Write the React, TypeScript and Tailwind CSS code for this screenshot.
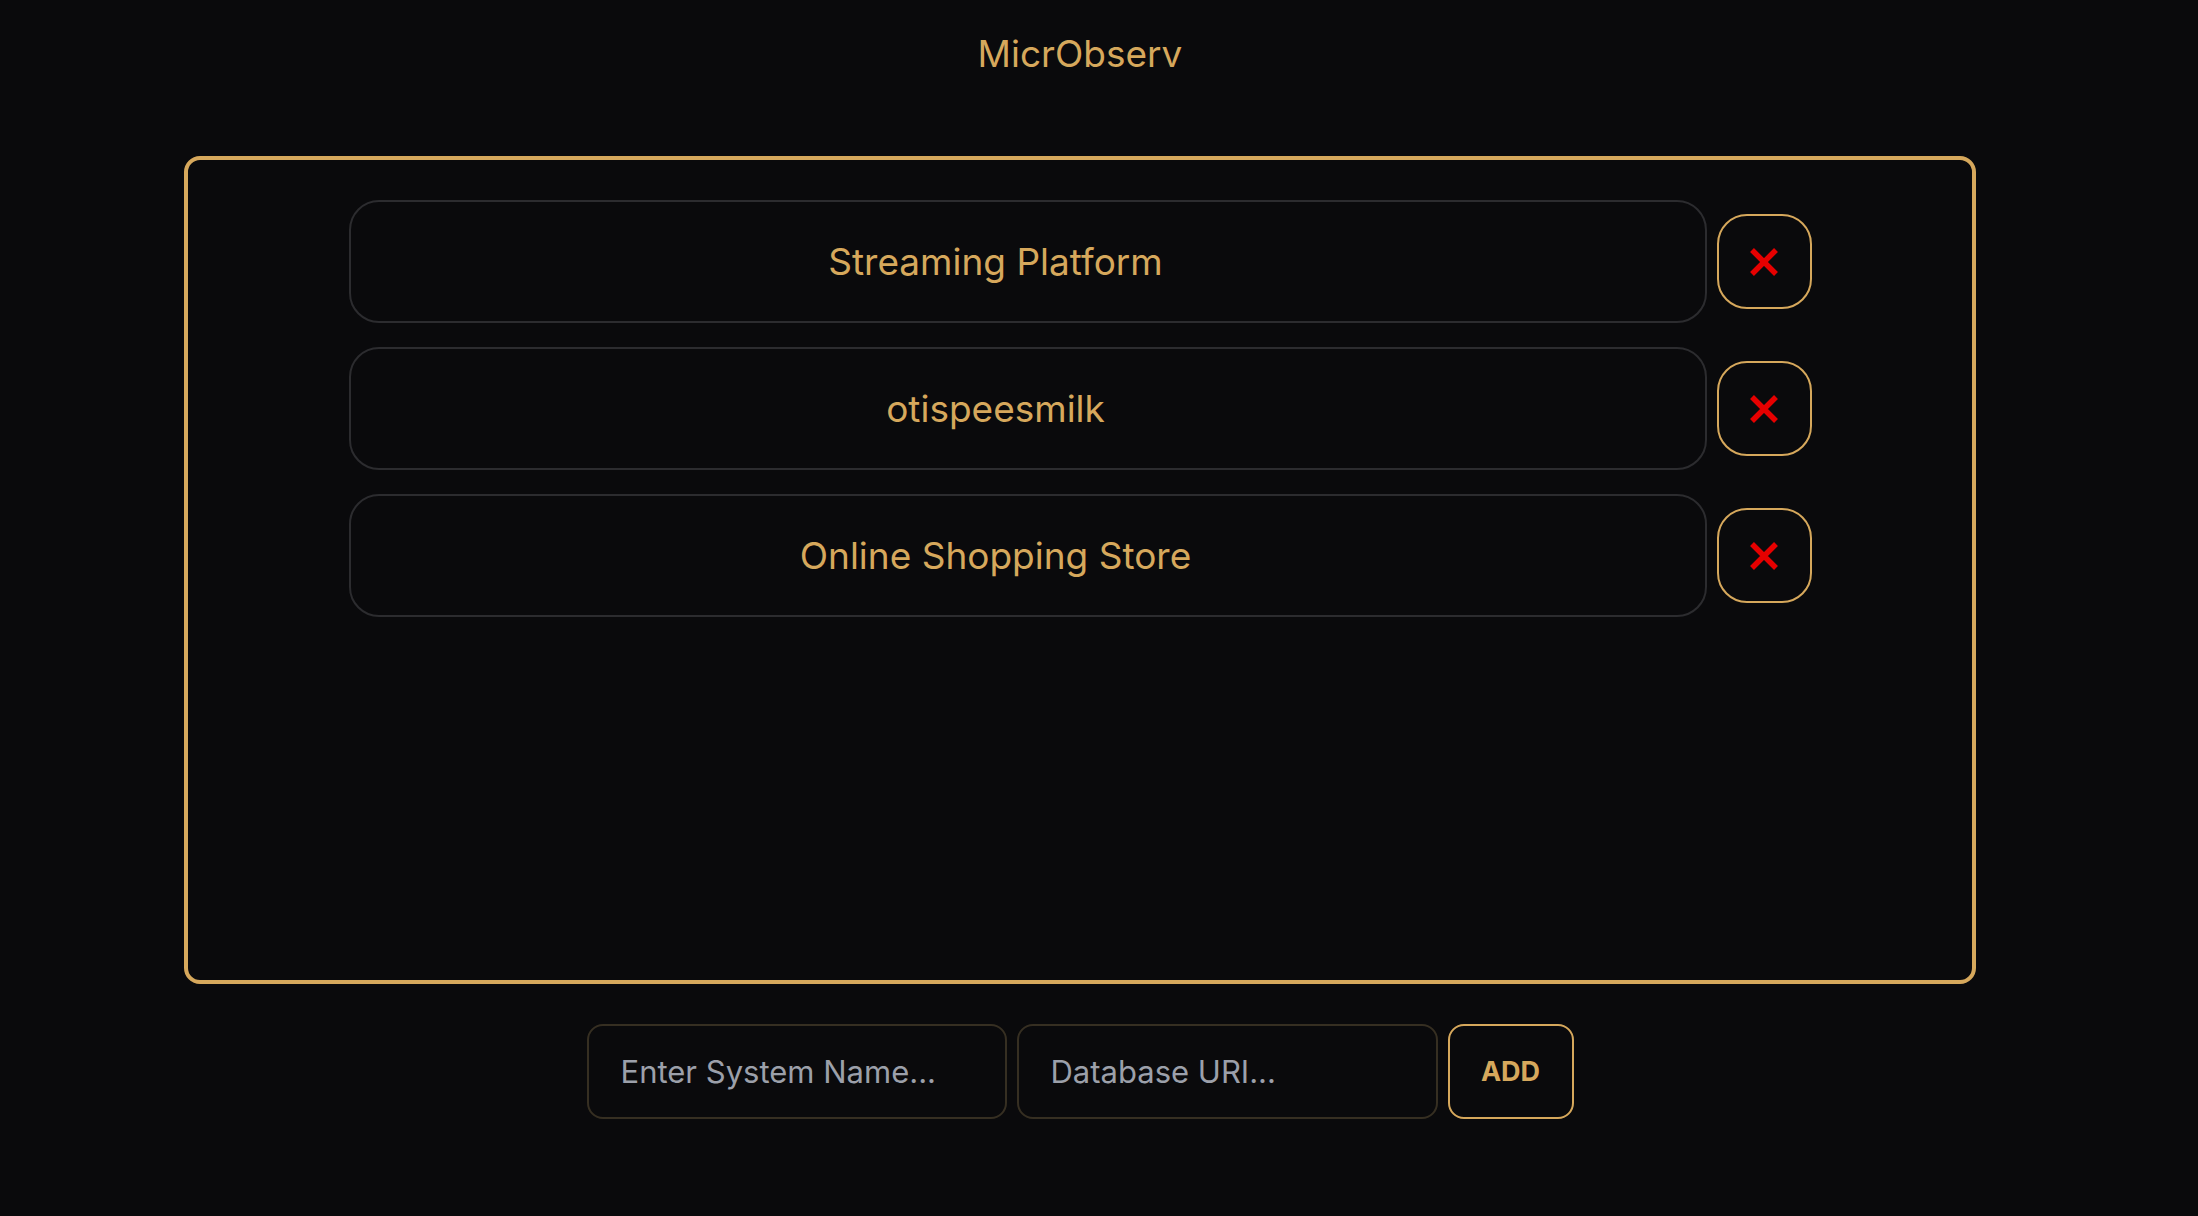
import { useState } from "react";

const systems = [
  { id: 1, name: "Streaming Platform" },
  { id: 2, name: "otispeesmilk" },
  { id: 3, name: "Online Shopping Store" },
];

function CrossIcon() {
  return (
    <svg width="28" height="28" viewBox="0 0 28 28" fill="none">
      <path d="M2 2L26 26M26 2L2 26" stroke="#e60000" strokeWidth="5.5" />
    </svg>
  );
}

export default function App() {
  const [name, setName] = useState("");
  const [uri, setUri] = useState("");

  return (
    <div
      className="min-h-screen w-full bg-[#0a0a0c]"
      style={{ fontFamily: "Inter, 'Noto Sans', sans-serif" }}
    >
      <div className="flex w-[2160px] flex-col items-center">
        {/* Header */}
        <h1 className="pt-[32px] text-[37px] leading-[44px] font-normal text-[#d6a85c]">
          MicrObserv
        </h1>

        {/* Systems panel */}
        <div className="mt-[80px] flex h-[828px] w-[1792px] flex-col items-center gap-[24px] rounded-[16px] border-4 border-[#d6a85c] pt-[40px]">
          {systems.map((s) => (
            <div key={s.id} className="flex items-center gap-[10px]">
              <div className="flex h-[123px] w-[1358px] items-center justify-center rounded-[30px] border-2 border-[#2c2c2f] pr-[64px]">
                <span className="text-[37px] text-[#d6a85c]">{s.name}</span>
              </div>
              <button className="flex h-[95px] w-[95px] items-center justify-center rounded-[30px] border-2 border-[#d6a85c]">
                <CrossIcon />
              </button>
            </div>
          ))}
        </div>

        {/* Add form */}
        <div className="mt-[40px] flex items-center gap-[10px]">
          <input
            value={name}
            onChange={(e) => setName(e.target.value)}
            placeholder="Enter System Name..."
            className="h-[95px] w-[420px] rounded-[16px] border-2 border-[#362f22] bg-transparent px-[32px] text-[31px] text-[#d6a85c] placeholder:text-[#9ca0aa] outline-none"
          />
          <input
            value={uri}
            onChange={(e) => setUri(e.target.value)}
            placeholder="Database URI..."
            className="h-[95px] w-[421px] rounded-[16px] border-2 border-[#362f22] bg-transparent px-[32px] text-[31px] text-[#d6a85c] placeholder:text-[#9ca0aa] outline-none"
          />
          <button className="flex h-[95px] w-[126px] items-center justify-center rounded-[16px] border-2 border-[#d6a85c] pt-[2px] text-[27px] font-bold text-[#d6a85c]">
            ADD
          </button>
        </div>
      </div>
    </div>
  );
}
